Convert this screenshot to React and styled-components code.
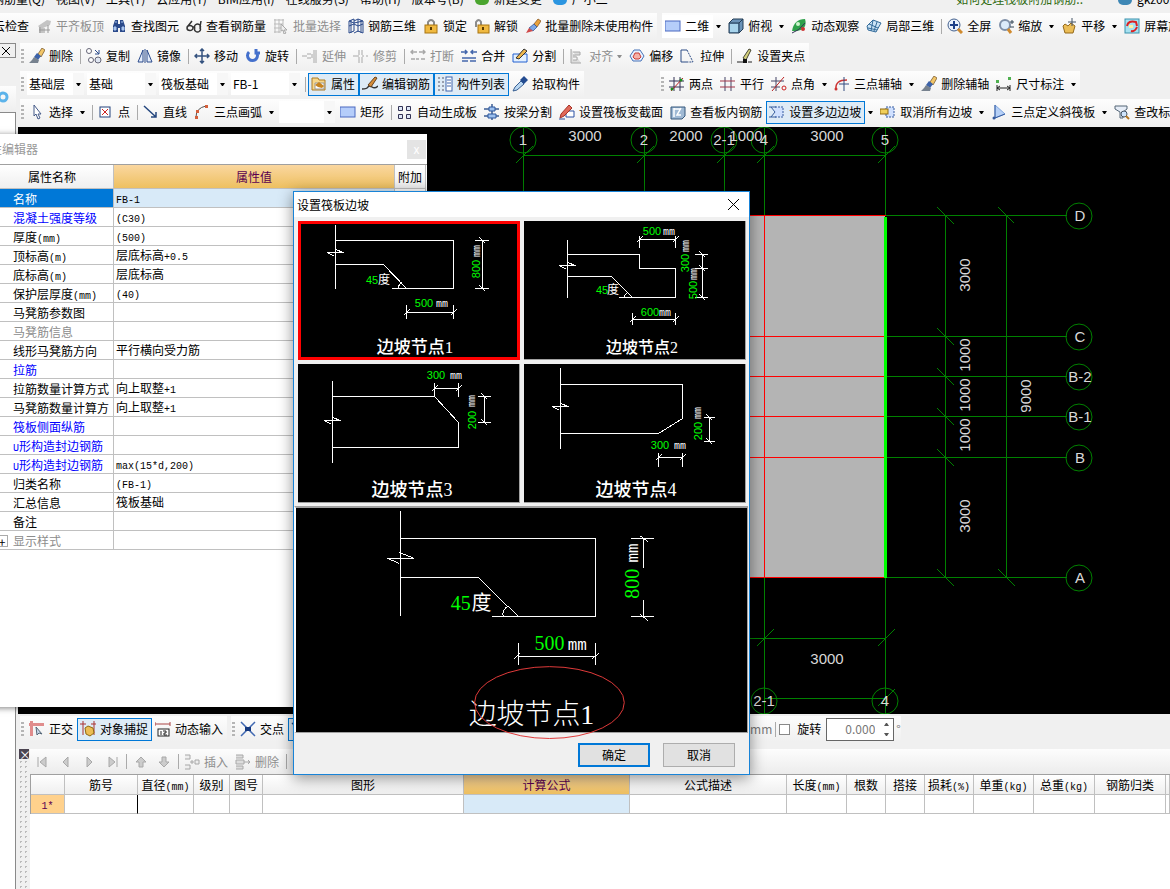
import { Fragment } from 'react';
import styled, { createGlobalStyle, css } from 'styled-components';

const navy = '#2b4a8b';
const grey = '#a8a8a8';

const icons = {
  level: <><path d="M2 8l9-6 4 1-1 4-7 3v5H3V9z" fill="#c4c4c4" /><path d="M4 15V9M8 15v-5M12 15V7M3 12h11" stroke="#999" fill="none" /></>,
  find: <><path d="M2 14V8l2-6h3v4h2V2h3l2 6v6H9v-4H7v4z" fill={navy} /><path d="M3 9h2v3H3zM11 9h2v3h-2zM4 4h2M10 4h2" fill="#a9c5ee" stroke="#a9c5ee" /></>,
  glasses: <path d="M1 10a3 2.500 0 1 0 6 0a3 2.500 0 1 0-6 0M9 10a3 2.500 0 1 0 5 0a3 2.500 0 1 0-5 0M7 9h2M2 8l4-5M14 9l1-6" stroke="#333" strokeWidth="1.500" fill="none" />,
  batch: <><path d="M1 2h10M1 6h9M1 10h7M1 14h7M2 1v14M6 1v14M10 1v7" stroke="#bbb" fill="none" /><path d="M8 6l6 6-3 0 2 3-2 1-1-4-2 1z" fill="#eee" stroke={grey} /></>,
  rebar3d: <path d="M1 3l5-2v12l-5 2zM6 3l4-2 5 2v12l-5-2-4 2M10 1v13M1 8l5-2 4 2 5-2M1 3l5 2 9-2M3 2v13M13 2v13" stroke={navy} fill="none" />,
  lock: <><path d="M5 8V4q3-4 6 0v4" stroke="#8b8b8b" strokeWidth="2" fill="none" /><rect x="2" y="7" width="12" height="8" fill="#f0b940" stroke="#a87510" /><path d="M8 9v3" stroke="#5b3b00" strokeWidth="2" /></>,
  unlock: <><path d="M2 9V4q3-4 5 0v4" stroke="#8b8b8b" strokeWidth="2" fill="none" /><rect x="4" y="7" width="11" height="8" fill="#f0b940" stroke="#a87510" /><path d="M9 9v3" stroke="#5b3b00" strokeWidth="2" /></>,
  brush: <><path d="M9 6l4-5 3 2-4 6z" fill="#e8a23c" stroke="#7c4a15" strokeWidth=".7" /><path d="M4 10l5-4 3 3-4 4z" fill="#7aa7e6" stroke={navy} strokeWidth=".7" /><path d="M1 15l3-5 4 3z" fill="#d04a4a" /></>,
  rect: <rect x="0" y="3" width="15" height="10" fill="#b5cdfa" stroke="#4a68c0" />,
  cube: <><path d="M1 5l4-4h10v10l-4 4H1z" fill="#6b93b8" stroke="#223c55" /><path d="M1 5h10v10M11 5l4-4" stroke="#223c55" fill="none" /><path d="M2 6h8v8H2z" fill="#a8d4ec" /></>,
  orbit: <><path d="M1 13Q3 1 14 1q3 10-8 12z" fill="#2fa14b" /><path d="M1 15q7-2 13-10" stroke="#335" fill="none" /><circle cx="7" cy="6" r="2" fill="#cdf5cd" /><circle cx="12" cy="11" r="2" fill="#c33" /></>,
  local3d: <path d="M1 8l6-6 8 3-5 9-8-2zM7 2L5 13M11 4L8 13M3 6l9 4M2 10l9 2" fill="#cbe3f5" stroke="#336b9a" />,
  full: <><circle cx="7" cy="7" r="6" fill="#e9f2fd" stroke="#44618e" /><path d="M7 3v8M3 7h8" stroke="#1b3f88" strokeWidth="2" /><path d="M11 11l4 4" stroke="#d08a2e" strokeWidth="3" /></>,
  zoom: <><circle cx="7" cy="7" r="5" fill="#dcebfa" stroke="#7f90a8" strokeWidth="2" /><path d="M10 11l3 4" stroke="#d08a2e" strokeWidth="3" /><path d="M12 4h4M14 2v4M12 9h4" stroke="#345" /></>,
  pan: <><path d="M2 8l2-2 3 2 3-3 4 3-2 7H4z" fill="#ebbd57" stroke="#94691b" /><path d="M11 0v8M7 4h8" stroke="#456" /></>,
  screen: <><rect x="1" y="1" width="14" height="14" fill="#a7e1f0" stroke="#3a92ad" /><path d="M3 8q1-6 9-4l1 4M13 9q-2 5-6 4" stroke="#d22" strokeWidth="2" fill="none" /><path d="M5 7h4v3H5z" fill="#fff3a0" /></>,
  erase: <><path d="M9 6l4-6 3 2-4 7z" fill="#f2c668" stroke="#6b4a1f" strokeWidth=".7" /><path d="M5 9l3-4 4 3-3 4z" fill="#3c62a8" /><path d="M0 15h9l1-3-5-3-2 3z" fill="#77828f" /></>,
  copy: <><circle cx="3" cy="3" r="2.500" fill="#fff" stroke="#667" /><circle cx="5" cy="12" r="2.500" fill="#fff" stroke="#667" /><circle cx="12" cy="12" r="3" fill="#dfe6f2" stroke="#667" /><path d="M9 2l4 4M13 2v4H9" stroke={navy} fill="none" /></>,
  mirror: <path d="M1 14L6 2v12zM15 14L10 2v12zM8 1v14" fill="#e6eefc" stroke={navy} />,
  move: <path d="M8 1v14M1 8h14M6 3l2-2 2 2M6 13l2 2 2-2M3 6L1 8l2 2M13 6l2 2-2 2" stroke="#34527f" strokeWidth="1.500" fill="none" />,
  rotate: <path d="M4 4a5 5 0 1 0 7 0M11 1v4h4" stroke="#4470cc" strokeWidth="3" fill="none" />,
  extend: <path d="M0 8h5M5 6h4M5 10h4M10 6v4M12 2v13M14 2v13" stroke={grey} fill="none" />,
  trim: <path d="M0 8h6M6 2v5M6 9v6M9 2v5M9 9v6M9 8h2M13 8h2" stroke={grey} fill="none" />,
  breakup: <path d="M1 4h6M9 4h6M1 11h4M6 11h3M11 11h4M3 2L1 4l2 2M13 2l2 2-2 2" stroke={grey} strokeWidth="1.500" fill="none" />,
  merge: <path d="M0 4h6M10 4h6M4 2l2 2-2 2M12 2l-2 2 2 2M1 10h14M1 13h6M9 13h6" stroke="#4467ac" strokeWidth="1.500" fill="none" />,
  split: <><path d="M1 6h14v8H1z" fill="#e3f0ff" stroke="#2260d0" /><path d="M4 10l8-9 3 2-8 8z" fill="#edb64d" stroke="#333" /></>,
  align: <path d="M2 1v14h10M4 4h7v3H4M4 9h4v3H4" stroke={grey} fill="#ddd" />,
  offset: <><path d="M5 2h6l4 6-3 5H4L1 8z" fill="#e5efff" stroke="#4672b8" /><path d="M6 5h4l2 4-2 2H6L4 9z" fill="#f5b0a8" stroke="#cc3b32" /></>,
  stretch: <><path d="M7 2H1v12h7" stroke="#2d4d86" fill="none" /><path d="M7 2l6 12H8" stroke="#2d4d86" strokeDasharray="2 1" fill="none" /></>,
  grip: <><path d="M0 14h6M11 14h4" stroke="#222" /><path d="M6 10l6-9 2 1-5 10z" fill="#d4d07c" stroke="#443" /><path d="M6 11h4v4H6z" fill="#111" /></>,
  prop: <><path d="M1 2h6l1 2h6v10H1z" fill="#f7d78a" stroke="#ad7b24" /><path d="M4 7h9v6H4z" fill="#fff" stroke="#999" /><path d="M4 9l4-3 5 4-2 2-4-1z" fill="#c88420" /></>,
  edit: <><path d="M0 13q5 0 6-2t4 0 6-1" stroke="#333" fill="none" strokeWidth="1.500" /><path d="M6 9l7-8 2 1-6 9z" fill="#d68d38" stroke="#66411c" /></>,
  list: <><path d="M1 2h2M1 6h2M1 10h2M1 14h2M5 2h2M5 6h2M5 10h2M5 14h2" stroke="#556" /><rect x="9" y="1" width="6" height="14" fill="#fff" stroke="#3f66ad" /><path d="M10 4h4M10 7h4M10 10h4" stroke="#3f66ad" /></>,
  pick: <><path d="M1 15l2-4 6-6 3 3-7 6z" fill="#b9d7f2" stroke="#385e91" /><path d="M8 4l4-4 4 4-4 4z" fill="#244c91" /></>,
  twopt: <><path d="M0 5h15M0 11h15M5 1v14M11 1v14" stroke="#335" /><path d="M2 15L14 2" stroke="#b22" /><circle cx="3" cy="13" r="1.500" fill="#1d8a1d" /><circle cx="12" cy="4" r="1.500" fill="#1d8a1d" /></>,
  parallel: <><path d="M5 1v14M11 1v14" stroke="#446" /><path d="M0 5h15M0 11h15" stroke="#a23548" /></>,
  ptangle: <><path d="M0 5h13M0 11h9M5 1v14" stroke="#446" /><path d="M1 15L13 1" stroke="#b22" /><circle cx="13" cy="12" r="2" stroke="#c22" fill="none" /></>,
  arcaxis: <><path d="M2 13Q1 4 13 4" stroke="#c33" strokeWidth="1.500" fill="none" /><path d="M5 8h10M10 1v14" stroke="#334a7f" /><circle cx="2" cy="13" r="1.500" fill="#c33" /></>,
  measure: <><path d="M1 9v6M14 9v6M1 12h13M4 10l-3 2 3 2M11 10l3 2-3 2" stroke="#222" fill="none" /><path d="M0 4h3v3H0zM12 1h3v3h-3z" fill="#4fb04f" /></>,
  cursor: <path d="M5 1v11l2-2 2 5 2-1-2-4h3z" fill="#fff" stroke="#445a88" />,
  point: <><rect x="2" y="3" width="10" height="10" fill="#fff" stroke="#23427d" /><path d="M4 5l6 6M10 5l-6 6" stroke="#c22" /></>,
  line: <path d="M1 2l12 11M13 8v5H8" stroke="#24467e" strokeWidth="1.500" fill="none" />,
  arc: <><path d="M2 13Q2 4 12 2" stroke="#555" fill="none" /><path d="M1 12h3v3H1zM2 6h3v3H2zM11 1h3v3h-3z" fill="#d5603c" /></>,
  autoslab: <path d="M1.500 2.500h4v4h-4zM9.500 2.500h4v4h-4zM1.500 10.500h4v4h-4zM9.500 10.500h4v4h-4z" fill="#dfe8f8" stroke="#335" />,
  beam: <><path d="M8 0v16M0 5h5M10 5h5M0 12h15" stroke="#3b5c94" strokeWidth="1.500" /><path d="M5 3h6v4H5zM4 10h8v4H4z" fill="#9cc0ee" stroke="#2d569c" /></>,
  section: <><path d="M7 7h8v6H7z" fill="#fff" stroke="#2b50a3" /><path d="M1 14l1-4 8-9 3 3-8 8z" fill="#e0695a" stroke="#a53328" /><path d="M0 15h6" stroke="#2b50a3" /></>,
  viewbar: <><path d="M1 3h14v9l-3 3H1z" fill="#9fb9d4" stroke="#36597d" /><path d="M4 4v9M4 5h7M11 4l-4 7h4" stroke="#fff" strokeWidth="1.500" fill="none" /></>,
  slope: <><path d="M6 3h8v10H6" fill="#cfe0ff" stroke="#345a9e" strokeDasharray="2 1" /><path d="M0 3h7M2 3l4 5-4 5M0 13h7" stroke="#345a9e" fill="none" /></>,
  cancel: <><path d="M6 3h8v10H6z" fill="#cfe0ff" stroke="#345a9e" strokeDasharray="2 1" /><rect x="0" y="5" width="8" height="5" fill="#f1cf58" stroke="#8f6a10" /></>,
  skew: <><path d="M4 1v13l10-4z" fill="#b6d0f6" stroke="#7fa5df" /><path d="M4 1v13l10-4" stroke="#345a9e" /><circle cx="3" cy="14" r="1.500" fill="#345a9e" /></>,
  check: <><path d="M1 2h12v3l-4 3v6H6V8L1 5z" fill="#e6edf7" stroke="#567" /><circle cx="10" cy="10" r="3" fill="#cfe4fb" stroke="#456" /><path d="M12 12l3 3" stroke="#b87822" strokeWidth="2" /></>,
  ortho: <><path d="M1 0h3v15H1zM0 2h15v3H0z" fill="#e08c8c" /><path d="M7 6l6 7-3-1-2 2z" fill="#c9d6e8" stroke="#567" /></>,
  snap: <><path d="M3 0v14M14 0v14M0 3h6M11 3h5" stroke="#a33" /><path d="M5 7l3-2 5 2 1 5-4 3-4-2z" fill="#ecbd55" stroke="#8f6a10" /></>,
  dyn: <><path d="M0 1v4M15 1v4M0 3h15" stroke="#a44" /><rect x="3" y="8" width="11" height="7" fill="#fff" stroke="#222" /><path d="M6 10v4M8 10h3v2H9v2h3" stroke="#222" fill="none" /></>,
  cross: <><path d="M1 1l14 14M15 1L1 15" stroke="#4169b2" strokeWidth="1.500" /><path d="M5 6h6v4H5z" fill="#163a80" /></>,
  insert: <path d="M1 1h5v4H1M1 11h5v4H1M6 8h4M8 6v4M11 6h4v4h-4z" stroke={grey} fill="#eee" />,
  remove: <path d="M1 1h7v3H1M1 6h8v4H1zM1 12h7v3H1M9 8h6M13 6l2 2-2 2" stroke={grey} fill="#ddd" />,
  first: <path d="M3 3v10M11 3L5 8l6 5z" fill="#ccc" stroke={grey} />,
  prev: <path d="M10 3L5 8l5 5z" fill="#ccc" stroke={grey} />,
  next: <path d="M6 3l5 5-5 5z" fill="#ccc" stroke={grey} />,
  last: <path d="M13 3v10M5 3l6 5-6 5z" fill="#ccc" stroke={grey} />,
  up: <path d="M8 3l5 5h-3v5H6V8H3z" fill="#ccc" stroke={grey} />,
  down: <path d="M8 13l5-5h-3V3H6v5H3z" fill="#ccc" stroke={grey} />,
};

// "|" is a separator, "v" the drop-down part of the button before it
const topTools = [
  ['level', '平齐板顶', 'off'], ['find', '查找图元'], ['glasses', '查看钢筋量'], ['batch', '批量选择', 'off'],
  ['rebar3d', '钢筋三维'], ['lock', '锁定'], ['unlock', '解锁'], ['brush', '批量删除未使用构件'],
];
const viewTools = [
  ['rect', '二维', 'white'], 'v', ['cube', '俯视'], 'v', ['orbit', '动态观察'], ['local3d', '局部三维'], '|',
  ['full', '全屏'], ['zoom', '缩放'], 'v', ['pan', '平移'], 'v', ['screen', '屏幕旋转'], 'v',
];
const editTools = [
  ['erase', '删除'], '|', ['copy', '复制'], ['mirror', '镜像'], '|', ['move', '移动'], ['rotate', '旋转'], '|',
  ['extend', '延伸', 'off'], ['trim', '修剪', 'off'], '|', ['breakup', '打断', 'off'], ['merge', '合并'], ['split', '分割'], '|',
  ['align', '对齐', 'off', true], ['offset', '偏移'], ['stretch', '拉伸'], '|', ['grip', '设置夹点'],
];
const panelTools = ['|', ['prop', '属性', 'on'], ['edit', '编辑钢筋', 'on'], ['list', '构件列表', 'on'], ['pick', '拾取构件']];
const axisTools = [
  ['twopt', '两点'], ['parallel', '平行'], ['ptangle', '点角'], 'v', ['arcaxis', '三点辅轴'], 'v',
  ['erase', '删除辅轴'], ['measure', '尺寸标注'], 'v',
];
const drawTools = [['cursor', '选择'], 'v', '|', ['point', '点'], '|', ['line', '直线'], ['arc', '三点画弧'], 'v'];
const slabTools = [
  ['rect', '矩形'], '|', ['autoslab', '自动生成板'], ['beam', '按梁分割'], ['section', '设置筏板变截面'], ['viewbar', '查看板内钢筋'],
  ['slope', '设置多边边坡', 'on'], 'v', ['cancel', '取消所有边坡'], 'v', ['skew', '三点定义斜筏板'], 'v', ['check', '查改标注'],
];
const snapTools = [['ortho', '正交'], ['snap', '对象捕捉', 'on'], ['dyn', '动态输入']];

const menus = ['钢筋量(Q)', '视图(V)', '工具(T)', '云应用(Y)', 'BIM应用(I)', '在线服务(S)', '帮助(H)', '版本号(B)'];

const properties = [
  ['名称', 'FB-1'],
  ['混凝土强度等级', '(C30)', 'blue'],
  ['厚度(mm)', '(500)'],
  ['顶标高(m)', '层底标高+0.5'],
  ['底标高(m)', '层底标高'],
  ['保护层厚度(mm)', '(40)'],
  ['马凳筋参数图', ''],
  ['马凳筋信息', '', '#8c8c8c'],
  ['线形马凳筋方向', '平行横向受力筋'],
  ['拉筋', '', 'blue'],
  ['拉筋数量计算方式', '向上取整+1'],
  ['马凳筋数量计算方', '向上取整+1'],
  ['筏板侧面纵筋', '', 'blue'],
  ['U形构造封边钢筋', '', 'blue'],
  ['U形构造封边钢筋', 'max(15*d,200)', 'blue'],
  ['归类名称', '(FB-1)'],
  ['汇总信息', '筏板基础'],
  ['备注', ''],
  ['显示样式', '', '#8c8c8c'],
];

const barColumns = [
  ['', 34], ['筋号', 73], ['直径(mm)', 56], ['级别', 36], ['图号', 33], ['图形', 201], ['计算公式', 166], ['公式描述', 157],
  ['长度(mm)', 60], ['根数', 39], ['搭接', 39], ['损耗(%)', 49], ['单重(kg)', 60], ['总重(kg)', 61], ['钢筋归类', 71],
];

const nodes = [
  {
    name: '边坡节点1', titleX: 117, size: 17,
    outline: 'M37 3V67M37 19H155V67H93M37 43H85L108 67M100 67Q100 62 104 61',
    cut: [37, 31],
    dims: ['M108 83V97M155 83V97M108 91H155M105 94l6-6M152 94l6-6', 'M176 19H190M176 67H190M184 19V67M181 16l6 6M181 64l6 6'],
    notes: [['45', 74, 59], ['度', 86, 59], ['500', 126, 82], ['mm', 144, 82], ['800', 178, 48, 1], ['mm', 178, 30, 1]],
  },
  {
    name: '边坡节点2', titleX: 118, size: 16,
    outline: 'M43 18V76M43 33H115V47H151V76H94M43 55H87L108 76M100 76Q100 72 104 71',
    cut: [43, 44],
    dims: ['M115 14V26M151 14V26M115 18H151M112 21l6-6M148 21l6-6', 'M108 91V103M151 91V103M108 98H151M105 101l6-6M148 101l6-6', 'M170 33H183M170 47H183M170 76H183M178 33V76M175 30l6 6M175 44l6 6M175 73l6 6'],
    notes: [['45', 78, 69], ['度', 89, 69], ['500', 128, 10], ['mm', 145, 10], ['600', 126, 91], ['mm', 141, 91], ['300', 161, 42, 1], ['mm', 161, 25, 1], ['500', 169, 69, 1], ['mm', 169, 53, 1]],
  },
  {
    name: '边坡节点3', titleX: 114, size: 18,
    outline: 'M34 16V98M34 32H136L160 58V83H34',
    cut: [34, 56],
    dims: ['M136 18V32M160 18V32M136 24H160M133 27l6-6M157 27l6-6', 'M179 32H192M179 58H192M186 32V58M183 29l6 6M183 55l6 6'],
    notes: [['300', 138, 11], ['mm', 158, 11], ['200', 174, 56, 1], ['mm', 173, 37, 1]],
  },
  {
    name: '边坡节点4', titleX: 112, size: 18,
    outline: 'M36 3V84M36 20H158V54L134 69H36',
    cut: [36, 42],
    dims: ['M134 88V102M158 88V102M134 93H158M131 96l6-6M155 96l6-6', 'M179 53H190M179 77H190M185 53V77M182 50l6 6M182 74l6 6'],
    notes: [['300', 136, 81], ['mm', 156, 81], ['200', 174, 67, 1], ['mm', 173, 49, 1]],
  },
];

const topAxes = [[523, '1'], [644, '2'], [724, '2-1'], [764, '4'], [885, '5']];
const sideAxes = [[215, 'D'], [336, 'C'], [376, 'B-2'], [416, 'B-1'], [457, 'B'], [577, 'A']];
const sideDims = [[965, 275, '3000'], [965, 355, '1000'], [965, 395, '1000'], [965, 435, '1000'], [965, 516, '3000'], [1026, 396, '9000']];

const Icon = ({ name }) => <IconBox viewBox="0 0 16 16" fill="none">{icons[name]}</IconBox>;

const Caret = () => (
  <CaretBox viewBox="0 0 5 3"><path d="M0 0h5L3 3H2z" fill="currentColor" /></CaretBox>
);

const Tools = ({ items }) => items.map((item, i) => {
  if (item === '|') return <Separator key={i} />;
  if (item === 'v') return <DropButton key={i} aria-label="更多"><Caret /></DropButton>;
  const [icon, label, state, menu] = item;
  return (
    <ToolButton key={i} $state={state} disabled={state === 'off'}>
      <Icon name={icon} />
      {label}
      {menu && <Caret />}
    </ToolButton>
  );
});

const Combo = ({ label, value, width }) => (
  <ComboBox $width={width}>
    <select aria-label={label} defaultValue={value}>
      <option>{value}</option>
    </select>
    <span><Caret /></span>
  </ComboBox>
);

// half-width characters take half the width of a Chinese one
const Song = ({ text }) => text.split(/([\x20-\x7e]+)/).map((part, i) => (
  i % 2 ? <Half key={i}>{part}</Half> : <Fragment key={i}>{part}</Fragment>
));

const NodeDrawing = ({ node }) => {
  const [x, y] = node.cut;
  return (
    <svg viewBox="0 0 221 138">
      <Ink transform="translate(.5 .5)">
        <path d={node.outline} />
        <path d={`M${x - 8} ${y}H${x + 8}M${x - 8} ${y}l7 4M${x} ${y - 3}l8 3`} />
        {node.dims.map((d) => <path key={d} d={d} />)}
      </Ink>
      {node.notes.map(([text, tx, ty, turned], i) => (
        <Note key={i} $text={text} x={tx} y={ty + 4} transform={turned ? `rotate(-90 ${tx} ${ty})` : undefined}>{text}</Note>
      ))}
      <NodeTitle $size={node.size} x={node.titleX} y="132">{node.name}</NodeTitle>
    </svg>
  );
};

const Preview = () => (
  <svg viewBox="0 0 452 224">
    <Ink transform="translate(.5 .5)">
      <path d="M104 3V108M104 30H300V108H196M104 69H182L222 108M207 108Q206 101 212 98" />
      <path d="M91 50H118M91 50l12 5M103 44l15 6" />
      <path d="M222 135V157M300 135V157M222 148H300M218 151l6-6M296 151l7-6" />
      <path d="M335 30H358M335 108H358M348 30V60M348 92V108M344 27l8 6M344 106l8 6" />
    </Ink>
    <BigNote $green x="165" y="102">45</BigNote>
    <BigNote x="186" y="102">度</BigNote>
    <BigNote $green x="254" y="142">500</BigNote>
    <BigNote $unit x="282" y="142">mm</BigNote>
    <BigNote $green x="337" y="83" transform="rotate(-90 337 76)">800</BigNote>
    <BigNote $unit x="337" y="51" transform="rotate(-90 337 45)">mm</BigNote>
    <NodeTitle $size={28} x="236" y="216">边坡节点1</NodeTitle>
    <ellipse cx="254" cy="195" rx="75" ry="36" fill="none" stroke="#e03a3a" />
  </svg>
);

const Drawing = () => (
  <Canvas>
    <svg width="100%" height="100%">
      <g transform="translate(-18 -127)">
        <rect x="523" y="216" width="362" height="361" fill="#b4b4b4" />
        <g transform="translate(.5 .5)" fill="none" stroke="#008000" shapeRendering="crispEdges">
          <path d="M523 155H885M764 638H885M764 698H885M523 638H764" />
          {topAxes.map(([x]) => <path key={x} d={`M${x} 127V215M${x - 8} 163L${x + 9} 146`} />)}
          {sideAxes.map(([y]) => <path key={y} d={`M885 ${y}H1066M937 ${y - 8}l17 17`} />)}
          <path d="M945 215V577M1006 215V577M998 207l16 16M998 569l17 17M764 577V714M885 577V714M756 646l17-17M877 646l17-17M877 706l17-17" />
          <path d="M523 215H885M523 336H885M523 376H885M523 416H885M523 457H885M523 577H885M764 215V577" stroke="red" />
          <path d="M885 216V577" stroke="lime" strokeWidth="3" />
        </g>
        {topAxes.map(([x, label]) => (
          <g key={x}><Bubble cx={x} cy="140" r="13" /><AxisText x={x} y="145">{label}</AxisText></g>
        ))}
        {sideAxes.map(([y, label]) => (
          <g key={y}><Bubble cx="1079" cy={y + 1} r="13" /><AxisText x="1080" y={y + 6}>{label}</AxisText></g>
        ))}
        <Bubble cx="764" cy="701" r="13" /><AxisText x="764" y="706">2-1</AxisText>
        <Bubble cx="885" cy="701" r="13" /><AxisText x="885" y="706">4</AxisText>
        <AxisText x="585" y="141">3000</AxisText>
        <AxisText x="686" y="141">2000</AxisText>
        <AxisText x="746" y="141">1000</AxisText>
        <AxisText x="827" y="141">3000</AxisText>
        <AxisText x="827" y="664">3000</AxisText>
        {sideDims.map(([x, y, label]) => (
          <AxisText key={`${x}-${y}`} x={x} y={y + 5} transform={`rotate(-90 ${x} ${y})`}>{label}</AxisText>
        ))}
      </g>
    </svg>
  </Canvas>
);

const PropertyEditor = () => (
  <EditorWindow>
    <EditorTitle>
      属性编辑器
      <button aria-label="关闭">x</button>
    </EditorTitle>
    <PropertyTable>
      <colgroup><col width="123" /><col width="281" /><col width="31" /></colgroup>
      <thead>
        <tr><HeadCell>属性名称</HeadCell><HeadCell $picked>属性值</HeadCell><HeadCell>附加</HeadCell></tr>
      </thead>
      <tbody>
        {properties.map(([name, value, color], i) => (
          <tr key={i}>
            <NameCell $color={color} $picked={i === 0}>
              {name === '显示样式' && <Expander aria-label="展开">+</Expander>}
              <Song text={name} />
            </NameCell>
            <ValueCell $picked={i === 0}><Song text={value} /></ValueCell>
            <ValueCell />
          </tr>
        ))}
      </tbody>
    </PropertyTable>
  </EditorWindow>
);

const SlopeDialog = () => (
  <Dialog role="dialog" aria-label="设置筏板边坡">
    <DialogTitle>
      设置筏板边坡
      <button aria-label="关闭">
        <svg width="11" height="11" viewBox="0 0 11 11"><path d="M0 0l11 11M11 0L0 11" stroke="#000" /></svg>
      </button>
    </DialogTitle>
    <NodeGrid>
      {nodes.map((node, i) => (
        <NodeButton key={node.name} $picked={i === 0}><NodeDrawing node={node} /></NodeButton>
      ))}
    </NodeGrid>
    <PreviewFrame><Preview /></PreviewFrame>
    <DialogFooter>
      <DialogButton $primary>确定</DialogButton>
      <DialogButton>取消</DialogButton>
    </DialogFooter>
  </Dialog>
);

const RebarPanel = () => (
  <BottomPanel>
    <DragRail><button aria-label="关闭">×</button></DragRail>
    <RebarArea>
      <RebarTools>
        {['first', 'prev', 'next', 'last'].map((n) => <NavButton key={n} aria-label={n}><Icon name={n} /></NavButton>)}
        <Separator />
        {['up', 'down'].map((n) => <NavButton key={n} aria-label={n}><Icon name={n} /></NavButton>)}
        <Separator />
        <Tools items={[['insert', '插入', 'off'], ['remove', '删除', 'off'], '|']} />
      </RebarTools>
      <RebarTable>
        <colgroup>
          {barColumns.map(([name, width]) => <col key={name} width={width} />)}
          <col />
        </colgroup>
        <thead>
          <tr>
            {barColumns.map(([name]) => <HeadCell key={name} $picked={name === '计算公式'}><Song text={name} /></HeadCell>)}
            <HeadCell />
          </tr>
        </thead>
        <tbody>
          <tr>
            {barColumns.map(([name]) => (
              <BarCell key={name} $name={name}>{name === '' && <Song text="1*" />}</BarCell>
            ))}
            <BarCell />
          </tr>
        </tbody>
      </RebarTable>
    </RebarArea>
  </BottomPanel>
);

const App = () => (
  <>
    <GlobalStyle />
    <Page>
      <MenuBar>
        {menus.map((menu) => <button key={menu}>{menu}</button>)}
        <button><MenuMark $color="#4aa52e" />新建变更</button>
        <button><MenuMark $color="#2b95e0" />广小二</button>
        <Tip href="#help">如何处理筏板附加钢筋..</Tip>
        <button><MenuMark $color="#3d87b5" />gkz001</button>
      </MenuBar>
      <TopRow>
        <Strip><ToolButton>云检查</ToolButton><Tools items={topTools} /></Strip>
        <Strip><Tools items={viewTools} /></Strip>
      </TopRow>
      <Workspace>
        <LeftDock>
          <button aria-label="关闭">
            <svg width="8" height="8" viewBox="0 0 8 8"><path d="M0 0l8 8M8 0L0 8" stroke="#000" /></svg>
          </button>
          <DockHead><svg width="9" height="12" viewBox="0 0 9 12"><circle cx="3" cy="6" r="4" fill="none" stroke="#5cb3ea" strokeWidth="3" /></svg></DockHead>
          <DockBody />
        </LeftDock>
        <Main>
          <Row><Strip><Grip /><Tools items={editTools} /></Strip></Row>
          <Row>
            <Strip>
              <Grip />
              <Combo label="楼层" value="基础层" width={57} />
              <Combo label="类别" value="基础" width={69} />
              <Combo label="构件类型" value="筏板基础" width={69} />
              <Combo label="构件" value="FB-1" width={69} />
              <Tools items={panelTools} />
            </Strip>
            <Gap $width={76} />
            <Strip><Grip /><Tools items={axisTools} /></Strip>
          </Row>
          <Row>
            <Strip>
              <Grip />
              <Tools items={drawTools} />
              <Combo label="方式" value="" width={56} />
              <Tools items={slabTools} />
            </Strip>
          </Row>
          <Drawing />
          <SnapRow>
            <Strip><Grip /><Tools items={snapTools} /></Strip>
            <Gap $width={4} />
            <Strip>
              <Grip />
              <Tools items={[['cross', '交点'], ['line', '垂点', 'on']]} />
              <Gap $width={409} />
              <Unit>mm</Unit>
              <Separator />
              <CheckLabel><input type="checkbox" />旋转</CheckLabel>
              <Spinner>
                <input aria-label="角度" defaultValue="0.000" />
                <span>
                  <svg width="5" height="3" viewBox="0 0 5 3"><path d="M0 3h5L3 0H2z" fill="#555" /></svg>
                  <svg width="5" height="3" viewBox="0 0 5 3"><path d="M0 0h5L3 3H2z" fill="#555" /></svg>
                </span>
              </Spinner>
              <Unit>°</Unit>
            </Strip>
          </SnapRow>
          <RebarPanel />
        </Main>
      </Workspace>
      <PropertyEditor />
      <SlopeDialog />
    </Page>
  </>
);

const GlobalStyle = createGlobalStyle`
  * {
    box-sizing: border-box;
  }

  body {
    margin: 0;
  }

  body, button, input, select {
    font: 12px/16px "Noto Sans CJK SC", "Liberation Sans", sans-serif;
    color: #000;
  }

  button {
    padding: 0;
    border: 0;
    background: none;
    white-space: nowrap;
  }
`;

const Page = styled.div`
  position: relative;
  display: flex;
  flex-direction: column;
  min-height: 100vh;
  overflow: hidden;
  background: #f0f0f0;
`;

const MenuBar = styled.nav`
  display: flex;
  align-items: flex-end;
  gap: 11px;
  height: 13px;
  margin: 0 -6px 0 -8px;
  padding-bottom: 6px;
  overflow: hidden;

  button {
    display: flex;
    align-items: center;
    gap: 5px;
    flex: none;
  }
`;

const MenuMark = styled.span`
  width: 14px;
  height: 12px;
  border-radius: 5px;
  background: ${(props) => props.$color};
`;

const Tip = styled.a`
  margin-left: auto;
  margin-right: 24px;
  flex: none;
  color: #2f6b10;
  text-decoration: none;
`;

const TopRow = styled.div`
  display: flex;
  gap: 5px;
  height: 28px;
  margin-left: -10px;
`;

const Strip = styled.div`
  display: flex;
  align-items: center;
  flex: none;
  height: 26px;
  background: linear-gradient(#fdfdfd, #f0f0f0);
`;

const Workspace = styled.div`
  display: flex;
  flex: 1;
`;

const LeftDock = styled.aside`
  display: flex;
  flex-direction: column;
  flex: none;
  width: 16px;
  margin-right: 2px;
  padding-top: 2px;

  > button {
    height: 15px;
    border: 1px solid #8a8a8a;
    border-left: 0;
    line-height: 8px;
    text-align: left;
    padding-left: 2px;
  }
`;

const DockHead = styled.div`
  height: 26px;
  margin-top: 28px;
  padding-top: 4px;
  background: linear-gradient(#fdfdfd, #eee);
`;

const DockBody = styled.div`
  flex: 1;
  border: solid #8a8a8a;
  border-width: 1px 1px 0 0;
  background: #fff;
`;

const Main = styled.main`
  display: flex;
  flex-direction: column;
  flex: 1;
  min-width: 0;
  padding-top: 1px;
`;

const Row = styled.div`
  display: flex;
  align-items: center;
  height: 28px;
  padding-left: 2px;
  overflow: hidden;
`;

const SnapRow = styled(Row)`
  flex: none;
  height: 35px;
  padding-bottom: 5px;
`;

const Gap = styled.div`
  flex: none;
  width: ${(props) => props.$width}px;
`;

const Grip = styled.span`
  width: 3px;
  height: 14px;
  margin: 0 2px 0 1px;
  background: repeating-linear-gradient(#b5b5b5 0 2px, transparent 2px 4px);
`;

const Separator = styled.span`
  flex: none;
  width: 1px;
  height: 15px;
  margin: 0 2px 0 3px;
  background: #aaa;
`;

const IconBox = styled.svg`
  flex: none;
  width: 16px;
  height: 16px;
`;

const CaretBox = styled.svg`
  width: 5px;
  height: 3px;
`;

const ToolButton = styled.button`
  display: flex;
  align-items: center;
  flex: none;
  gap: 4px;
  height: 23px;
  padding: 0 4px 0 3px;

  &:disabled {
    color: #8e8e8e;
  }

  ${(props) => props.$state === 'white' && css`
    background: #fff;
  `}

  ${(props) => props.$state === 'on' && css`
    background: #deebf6;
    box-shadow: inset 0 0 0 1px #0078d7;
  `}
`;

const DropButton = styled.button`
  display: flex;
  align-items: center;
  justify-content: center;
  flex: none;
  width: 12px;
  height: 22px;
  padding-right: 1px;
`;

const ComboBox = styled.div`
  display: flex;
  flex: none;
  width: ${(props) => props.$width}px;
  height: 22px;
  margin: 0 2px 0 1px;
  background: #fff;

  select {
    flex: 1;
    min-width: 0;
    padding: 0 0 0 2px;
    border: 0;
    background: #fff;
    appearance: none;
  }

  span {
    display: flex;
    align-items: center;
    justify-content: center;
    width: 11px;
    background: #f7f7f7;
  }
`;

const Canvas = styled.div`
  flex: 1 0 auto;
  display: flex;
  margin-top: 1px;
  background: #000;
`;

const Bubble = styled.circle`
  fill: none;
  stroke: #008000;
`;

const AxisText = styled.text`
  font: 15px "Liberation Sans", sans-serif;
  fill: #d8d8d8;
  text-anchor: middle;
`;

const Unit = styled.span`
  padding-left: 2px;
  color: #777;
`;

const CheckLabel = styled.label`
  display: flex;
  align-items: center;
  gap: 7px;

  input {
    width: 11px;
    height: 11px;
    margin: 0 0 0 1px;
    border: 1px solid #888;
    background: #fff;
    appearance: none;
  }
`;

const Spinner = styled.div`
  display: flex;
  width: 68px;
  height: 23px;
  margin-left: 5px;
  border: 1px solid #666;
  background: #fff;

  input {
    flex: 1;
    min-width: 0;
    padding: 0 5px;
    border: 0;
    background: none;
    color: #777;
    text-align: right;
  }

  span {
    display: flex;
    flex-direction: column;
    justify-content: space-between;
    width: 13px;
    padding: 4px 0 4px 4px;
  }
`;

const Half = styled.span`
  font-family: "Liberation Mono", monospace;
  font-size: 10px;
  line-height: 10px;
`;

const HeadCell = styled.th`
  padding: 0;
  border: solid #c0c0c0;
  border-width: 0 1px 1px 0;
  background: ${(props) => (props.$picked ? 'linear-gradient(#fad7a0, #eec060)' : 'linear-gradient(#fff, #efefef)')};
  color: ${(props) => (props.$picked ? '#5a0050' : '#000')};
  font-weight: 400;
  line-height: 16px;
  white-space: nowrap;
`;

const EditorWindow = styled.section`
  position: absolute;
  top: 134px;
  left: -28px;
  width: 455px;
  min-height: 573px;
  background: #fff;
  box-shadow: 0 1px 6px rgba(0, 0, 0, 0.5);
`;

const EditorTitle = styled.header`
  display: flex;
  align-items: center;
  justify-content: space-between;
  height: 31px;
  padding: 0 1px 0 6px;
  border-bottom: 1px solid #a0a0a0;
  color: #999;

  button {
    width: 19px;
    height: 19px;
    background: #e4e4e4;
    color: #fff;
  }
`;

const PropertyTable = styled.table`
  width: 435px;
  margin-left: 19px;
  table-layout: fixed;
  border-spacing: 0;

  thead tr {
    height: 24px;
  }

  tbody tr {
    height: 19px;
  }
`;

const NameCell = styled.td`
  padding: 1px 0 0 22px;
  border: solid #c0c0c0;
  border-width: 0 1px 1px 0;
  background: ${(props) => (props.$picked ? '#0078d7' : '#fff')};
  color: ${(props) => (props.$picked ? '#fff' : props.$color || '#000')};
  line-height: 16px;
  white-space: nowrap;
`;

const Expander = styled.button`
  width: 12px;
  height: 12px;
  margin-left: -17px;
  margin-right: 5px;
  border: 1px solid #aaa;
  line-height: 9px;
  vertical-align: -1px;
`;

const ValueCell = styled.td`
  padding: 0 0 0 2px;
  border: solid #c0c0c0;
  border-width: 0 1px 1px 0;
  background: ${(props) => (props.$picked ? '#d8eaf8' : '#fff')};
  line-height: 16px;
`;

const Dialog = styled.section`
  position: absolute;
  top: 191px;
  left: 293px;
  width: 457px;
  border: 1px solid #1883d7;
  background: #f0f0f0;
  box-shadow: 0 3px 14px rgba(0, 0, 0, 0.45);
`;

const DialogTitle = styled.header`
  display: flex;
  align-items: center;
  justify-content: space-between;
  height: 25px;
  padding: 0 10px 0 3px;
  background: #fff;

  button {
    display: flex;
  }
`;

const NodeGrid = styled.div`
  display: grid;
  grid-template-columns: 1fr 1fr;
  gap: 4px;
  padding: 4px 3px 3px 4px;
`;

const NodeButton = styled.button`
  border: solid #a0a0a0;
  border-width: 0 1px 1px 0;
  background: #000;

  svg {
    display: block;
    width: 100%;
  }

  ${(props) => props.$picked && css`
    outline: 3px solid red;
    outline-offset: -3px;
  `}
`;

const Ink = styled.g`
  fill: none;
  stroke: #fff;
  shape-rendering: crispEdges;
`;

const Note = styled.text`
  font: 11px "Liberation Sans", "Noto Sans CJK SC", sans-serif;
  fill: ${(props) => (/\d/.test(props.$text) ? '#0f0' : '#fff')};
  text-anchor: middle;

  ${(props) => props.$text === 'mm' && css`
    font: 10px "Liberation Mono", monospace;
  `}

  ${(props) => props.$text === '度' && css`
    font-size: 12px;
  `}
`;

const BigNote = styled.text`
  font: 20px "Liberation Serif", "Noto Sans CJK SC", serif;
  fill: ${(props) => (props.$green ? '#0f0' : '#fff')};
  text-anchor: middle;

  ${(props) => props.$unit && css`
    font: 16px "Liberation Mono", monospace;
  `}
`;

const NodeTitle = styled.text`
  font: ${(props) => props.$size}px "Liberation Serif", "Noto Sans CJK SC", serif;
  font-weight: ${(props) => (props.$size < 20 ? 500 : 300)};
  fill: #fff;
  text-anchor: middle;
`;

const PreviewFrame = styled.div`
  margin-right: 1px;
  border: solid;
  border-width: 2px 1px 1px 2px;
  border-color: #a0a0a0 #a0a0a0 #a0a0a0 #fff;

  svg {
    display: block;
    width: 100%;
    overflow: visible;
    background: #000;
  }
`;

const DialogFooter = styled.footer`
  display: flex;
  justify-content: flex-end;
  gap: 13px;
  padding: 10px 14px 7px;
`;

const DialogButton = styled.button`
  width: 72px;
  height: 24px;
  border: ${(props) => (props.$primary ? '2px solid #0078d7' : '1px solid #adadad')};
  background: #e1e1e1;
`;

const BottomPanel = styled.section`
  display: flex;
  flex: none;
  height: 140px;
`;

const DragRail = styled.div`
  width: 12px;
  padding: 0 3px 0 1px;
  background: radial-gradient(#bbb 1px, transparent 1px) 0 0 / 5px 5px;

  button {
    display: block;
    width: 10px;
    height: 10px;
    background: #4b4350;
    color: #fff;
    line-height: 9px;
  }
`;

const RebarArea = styled.div`
  display: flex;
  flex-direction: column;
  flex: 1;
  min-width: 0;
  background: #fff;
`;

const RebarTools = styled.div`
  display: flex;
  align-items: center;
  flex: none;
  height: 26px;
  padding-left: 1px;
  border-bottom: 1px solid #a0a0a0;
  background: linear-gradient(#fdfdfd, #ececec);
`;

const NavButton = styled.button`
  width: 23px;
  height: 16px;
`;

const RebarTable = styled.table`
  width: 100%;
  table-layout: fixed;
  border-left: 1px solid #a0a0a0;
  border-spacing: 0;

  tr {
    height: 20px;
  }

  tbody tr {
    height: 19px;
  }
`;

const BarCell = styled.td`
  padding: 0;
  border: solid #c0c0c0;
  border-width: 0 1px 1px 0;
  border-right-color: ${(props) => (props.$name === '筋号' ? '#000' : '#c0c0c0')};
  line-height: 16px;
  text-align: center;
  color: #5a0050;

  ${(props) => props.$name === '' && css`
    background: #ffd18c;
  `}

  ${(props) => props.$name === '计算公式' && css`
    background: #d8eaf8;
  `}
`;

export default App;
